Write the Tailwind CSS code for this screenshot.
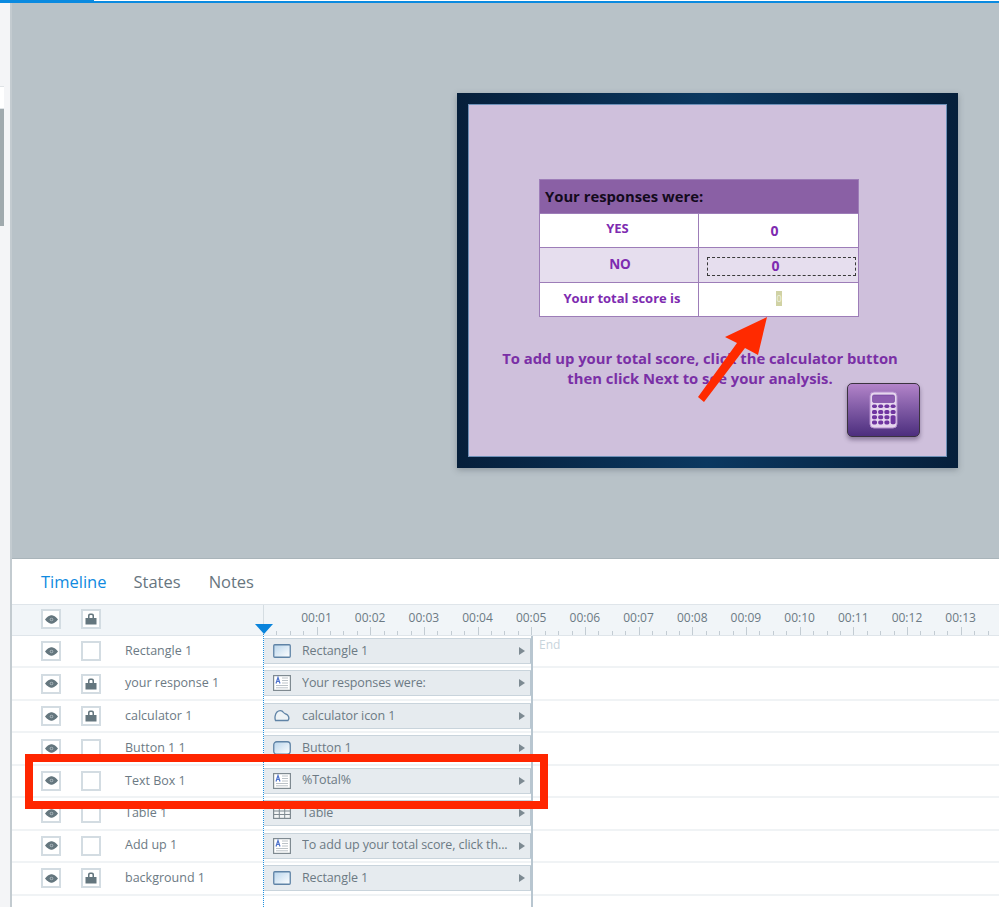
<!DOCTYPE html>
<html lang="en">
<head>
    <meta charset="UTF-8">
    <title>Timeline</title>
    <script src="https://cdn.jsdelivr.net/npm/@tailwindcss/browser@4"></script>
</head>
<body class="bg-white font-['Open_Sans',sans-serif] overflow-hidden">
<div class="relative w-[999px] h-[907px] overflow-hidden flex flex-col">

    <!-- top bar -->
    <div class="h-[3px] flex shrink-0">
        <div class="w-[94px] bg-[#0a8ae0]"></div>
        <div class="flex-1 bg-white border-b-2 border-[#0a8ae0]"></div>
    </div>

    <div class="flex flex-1 min-h-0">
        <!-- left strip -->
        <div class="w-[12px] shrink-0 bg-[#f4f5f7] border-r-2 border-[#c3cbd0] pt-[83px]">
            <div class="w-[4px] h-[23px] bg-white border-y border-[#dfe3e6]"></div>
            <div class="w-[4px] h-[117px] bg-[#a0aaae]"></div>
        </div>

        <div class="flex-1 flex flex-col min-w-0">
            <!-- canvas -->
            <div class="h-[556px] shrink-0 bg-[#b8c2c8] border-b border-[#a9b4ba] pl-[445px] pt-[90px]">
                <div class="relative w-[501px] h-[375px] p-[11px] bg-[linear-gradient(90deg,#061f3b_0%,#0b3860_50%,#061f3b_100%)] shadow-[0_2px_6px_rgba(60,70,80,0.35)]">
                    <div class="relative w-[479px] h-[353px] bg-[#cfc0dc] border border-[#6e90b8] pl-[70px] pt-[74px]">
                        <div class="w-[320px] border border-[#9d7db8] font-bold text-[#7e2bb0]">
                            <div class="h-[34px] bg-[#8a60a5] border-b border-[#9d7db8] pl-[5px] flex items-center text-[14.800px] text-[#130a1c]">Your responses were:</div>
                            <div class="flex h-[34px] bg-white border-b border-[#9d7db8]">
                                <div class="w-[159px] border-r border-[#9d7db8] flex justify-center pt-[5px] pr-[3px] text-[13px]">YES</div>
                                <div class="flex-1 flex justify-center pt-[6px] pr-[8px] text-[14px]">0</div>
                            </div>
                            <div class="flex h-[35px] bg-[#e6deee] border-b border-[#9d7db8]">
                                <div class="w-[159px] border-r border-[#9d7db8] flex justify-center pt-[6px] pl-[2px] text-[13.500px]">NO</div>
                                <div class="flex-1 pl-[8px] pt-[9px] pr-[2px]">
                                    <div class="h-[19px] pb-[2px] border border-dashed border-[#3a3a3a] flex justify-center items-center pr-[12px] text-[14px]">0</div>
                                </div>
                            </div>
                            <div class="flex h-[33px] bg-white">
                                <div class="w-[159px] border-r border-[#9d7db8] flex justify-center pt-[6px] pl-[6px] text-[13px]">Your total score is</div>
                                <div class="flex-1 pl-[77px] pt-[8px]">
                                    <div class="w-[6px] h-[15px] bg-[#d0d2a4] text-[#f1f2e2] text-[9px] leading-[15px] text-center font-normal">0</div>
                                </div>
                            </div>
                        </div>
                        <p class="-ml-[70px] w-[462px] mt-[31px] text-center text-[14.800px] leading-[20px] font-bold text-[#7a2fa6]">To add up your total score, click the calculator button<br>then click Next to see your analysis.</p>

                        <!-- calculator button -->
                        <div class="absolute left-[378px] top-[278px] w-[73px] h-[54px] rounded-[5px] border border-[#3b3340] bg-gradient-to-b from-[#b384c9] to-[#4d2e7e] shadow-[0_3px_4px_rgba(60,40,80,0.45)] flex items-center justify-center">
                            <svg width="29" height="38" viewBox="0 0 29 38">
                                <rect x="1" y="1" width="27" height="36" rx="4" fill="#e6d6ee" stroke="#b48fce" stroke-width="1"/>
                                <rect x="3.5" y="4" width="22" height="7.5" rx="1.5" fill="#8c5cb0" stroke="#6a3a98" stroke-width="0.6"/>
                                <g fill="#6f35a0">
                                    <rect x="3" y="13.5" width="5" height="3.4" rx="1.7"/><rect x="9.2" y="13.5" width="5" height="3.4" rx="1.7"/><rect x="15.4" y="13.5" width="5" height="3.4" rx="1.7"/><rect x="21.6" y="13.5" width="5" height="3.4" rx="1.7"/>
                                    <rect x="3" y="19" width="5" height="4" rx="1.6"/><rect x="9.2" y="19" width="5" height="4" rx="1.6"/><rect x="15.4" y="19" width="5" height="4" rx="1.6"/><rect x="21.6" y="19" width="5" height="4" rx="1.6"/>
                                    <rect x="3" y="24.2" width="5" height="4" rx="1.6"/><rect x="9.2" y="24.2" width="5" height="4" rx="1.6"/><rect x="15.4" y="24.2" width="5" height="4" rx="1.6"/><rect x="21.6" y="24.2" width="5" height="9" rx="1.6"/>
                                    <rect x="3" y="29.4" width="5" height="4" rx="1.6"/><rect x="9.2" y="29.4" width="5" height="4" rx="1.6"/><rect x="15.4" y="29.4" width="5" height="4" rx="1.6"/>
                                </g>
                            </svg>
                        </div>
                    </div>
                </div>
            </div>

            <!-- tabs -->
            <div class="h-[45px] shrink-0 bg-white flex items-center pl-[29px] pt-[2px] text-[16.500px] text-[#68767f]">
                <span class="text-[#0f8ae0]">Timeline</span>
                <span class="ml-[27px]">States</span>
                <span class="ml-[28px]">Notes</span>
            </div>

            <!-- ruler row -->
            <div class="h-[32px] shrink-0 flex bg-[#f1f5f8] border-y border-[#dfe5ea]">
                <div class="w-[252px] shrink-0 border-r border-[#d5dde2] flex gap-[20px] pl-[29px] pt-[4px]">
                    <div class="w-[20px] h-[20px] bg-white border-2 border-[#d3dce2] flex items-center justify-center">
                        <svg width="13" height="9" viewBox="0 0 13 9"><path d="M0 4.500C3 1 5 0.300 6.500 0.300S10 1 13 4.500C10 8 8 8.700 6.500 8.700S3 8 0 4.500Z" fill="#64767e"/><circle cx="6.500" cy="4.500" r="1.800" fill="#a9b5bb"/><circle cx="6.500" cy="4.500" r="1" fill="#64767e"/></svg>
                    </div>
                    <div class="w-[20px] h-[20px] bg-white border-2 border-[#d3dce2] flex items-center justify-center">
                        <svg width="12" height="12" viewBox="0 0 12 12"><path d="M3 5.500V2.500Q3 0.500 5 0.500H7Q9 0.500 9 2.500V5.500H7.500V3Q7.500 2 6.500 2H5.500Q4.500 2 4.500 3V5.500Z" fill="#64767e"/><rect x="0.500" y="5" width="11" height="6.500" fill="#64767e"/></svg>
                    </div>
                </div>
                <div id="ruler" class="flex-1 relative overflow-hidden"></div>
            </div>

            <!-- layer rows -->
            <div id="rows" class="relative flex-1 min-h-0"></div>
        </div>
    </div>

    <!-- playhead -->
    <div class="absolute left-[263px] top-[634px] bottom-0 w-px bg-[repeating-linear-gradient(180deg,#1e90e0_0px,#1e90e0_1px,#ffffff_1px,#ffffff_2px)]"></div>
    <div class="absolute left-[255px] top-[624px] w-0 h-0 border-x-[9px] border-x-transparent border-t-[10px] border-t-[#0a84dc]"></div>

    <!-- callouts drawn on top of the screenshot -->
    <svg class="absolute left-[690px] top-[310px]" width="85" height="100" viewBox="690 310 85 100">
        <polygon points="767,317 758,355 745,348 704,402 698,397 737,343 725,337" fill="#ff2a00"/>
    </svg>
    <div class="absolute left-[25px] top-[754px] w-[523px] h-[55px] border-[8px] border-[#ff2600]"></div>
</div>

<script>
    // Ruler ticks and labels
    const ruler = document.getElementById('ruler');
    const secWidth = 53.68;
    let rulerHtml = '';
    for (let i = 0; i < 56; i++) {
        const x = i * secWidth / 4 - 1.1;
        const major = i % 4 === 0 && i > 0;
        rulerHtml += `<div class="absolute bottom-0 w-px bg-[#c3ccd3] ${major ? 'h-[8px]' : 'h-[4px]'}" style="left:${x}px"></div>`;
    }
    for (let s = 1; s <= 13; s++) {
        const label = '00:' + String(s).padStart(2, '0');
        rulerHtml += `<div class="absolute top-[4px] w-[40px] text-center text-[12px] text-[#6c7a84]" style="left:${s * secWidth - 21.2}px">${label}</div>`;
    }
    ruler.innerHTML = rulerHtml;

    // Layer icons
    const rectIcon = `<svg width="18" height="14" viewBox="0 0 18 14"><defs><linearGradient id="g" x1="0" y1="0" x2="1" y2="1"><stop offset="0" stop-color="#b9d5ec"/><stop offset="1" stop-color="#ffffff"/></linearGradient></defs><rect x="0.750" y="0.750" width="16.500" height="12.500" rx="1" fill="url(#g)" stroke="#5f83a6" stroke-width="1.300"/></svg>`;
    const buttonIcon = `<svg width="18" height="14" viewBox="0 0 18 14"><rect x="0.750" y="0.750" width="16.500" height="12.500" rx="3" fill="url(#g)" stroke="#5f83a6" stroke-width="1.300"/></svg>`;
    const textIcon = `<svg width="18" height="16" viewBox="0 0 18 16"><rect x="0.600" y="0.600" width="16.800" height="14.800" fill="#fff" stroke="#7f8a91" stroke-width="1.200"/><path d="M3 8.500L5 2.500 7 8.500M3.800 6.500H6.200" fill="none" stroke="#4f73cc" stroke-width="1.200"/><path d="M9 3h6M9 5.500h6M9 8h6M3 10.500h12M3 12.800h12" stroke="#b4bcc2" stroke-width="0.900"/></svg>`;
    const cloudIcon = `<svg width="16" height="13" viewBox="0 0 16 13"><path d="M1.500 11.500C0.500 9 1 5 3 3C5 1 8 1 9.500 3.500C10.500 5 12 4.500 13.500 6C15 7.500 15 10 14 11.500Z" fill="#eef3f6" stroke="#5f83a6" stroke-width="1.300"/></svg>`;
    const tableIcon = `<svg width="18" height="12" viewBox="0 0 18 12"><rect x="0.600" y="0.600" width="16.800" height="10.800" fill="#f4f6f7" stroke="#7f8a91" stroke-width="1.200"/><path d="M6.300 1v10M11.700 1v10M1 4h16M1 7.500h16" stroke="#7f8a91" stroke-width="1"/></svg>`;
    const eyeIcon = `<svg width="13" height="9" viewBox="0 0 13 9"><path d="M0 4.500C3 1 5 0.300 6.500 0.300S10 1 13 4.500C10 8 8 8.700 6.500 8.700S3 8 0 4.500Z" fill="#64767e"/><circle cx="6.500" cy="4.500" r="1.800" fill="#a9b5bb"/><circle cx="6.500" cy="4.500" r="1" fill="#64767e"/></svg>`;
    const lockIcon = `<svg width="12" height="12" viewBox="0 0 12 12"><path d="M3 5.500V2.500Q3 0.500 5 0.500H7Q9 0.500 9 2.500V5.500H7.500V3Q7.500 2 6.500 2H5.500Q4.500 2 4.500 3V5.500Z" fill="#64767e"/><rect x="0.500" y="5" width="11" height="6.500" fill="#64767e"/></svg>`;

    const layers = [
        { name: 'Rectangle 1', locked: false, icon: rectIcon, clip: 'Rectangle 1' },
        { name: 'your response 1', locked: true, icon: textIcon, clip: 'Your responses were:' },
        { name: 'calculator 1', locked: true, icon: cloudIcon, clip: 'calculator icon 1' },
        { name: 'Button 1 1', locked: false, icon: buttonIcon, clip: 'Button 1' },
        { name: 'Text Box 1', locked: false, icon: textIcon, clip: '%Total%' },
        { name: 'Table 1', locked: false, icon: tableIcon, clip: 'Table' },
        { name: 'Add up 1', locked: false, icon: textIcon, clip: 'To add up your total score, click th...' },
        { name: 'background 1', locked: true, icon: rectIcon, clip: 'Rectangle 1' },
    ];

    document.getElementById('rows').innerHTML = layers.map((l, i) => `
        <div class="h-[32.440px] flex border-b-2 border-[#f0f3f5]">
            <div class="w-[251px] shrink-0 flex items-center pl-[29px] gap-[20px] text-[12.500px] text-[#6c7a84]">
                <div class="w-[20px] h-[20px] border-2 border-[#d3dce2] flex items-center justify-center bg-white shrink-0">${eyeIcon}</div>
                <div class="w-[20px] h-[20px] border-2 border-[#d3dce2] flex items-center justify-center bg-white shrink-0">${l.locked ? lockIcon : ''}</div>
                <span class="ml-[4px] whitespace-nowrap">${l.name}</span>
            </div>
            <div class="w-[268px] shrink-0 h-[26px] mt-[2px] ml-[1px] bg-[#e6ebef] border-y border-[#c9d4dc] border-r-2 border-r-[#b8c6d0] flex items-center pl-[9px] pr-[5px] text-[12.500px] tracking-[-0.100px] text-[#6c7a84]">
                <span class="w-[18px] flex justify-center shrink-0">${l.icon}</span>
                <span class="ml-[11px] flex-1 whitespace-nowrap overflow-hidden">${l.clip}</span>
                <span class="w-0 h-0 border-y-[4px] border-y-transparent border-l-[6px] border-l-[#7d8a92]"></span>
            </div>
            ${i === 0 ? '<span class="ml-[7px] text-[12px] text-[#c8d4dc]">End</span>' : ''}
        </div>`).join('') + '<div class="absolute left-[519px] top-0 bottom-0 w-[2px] bg-[#b8c6d0]"></div>';
</script>
</body>
</html>
